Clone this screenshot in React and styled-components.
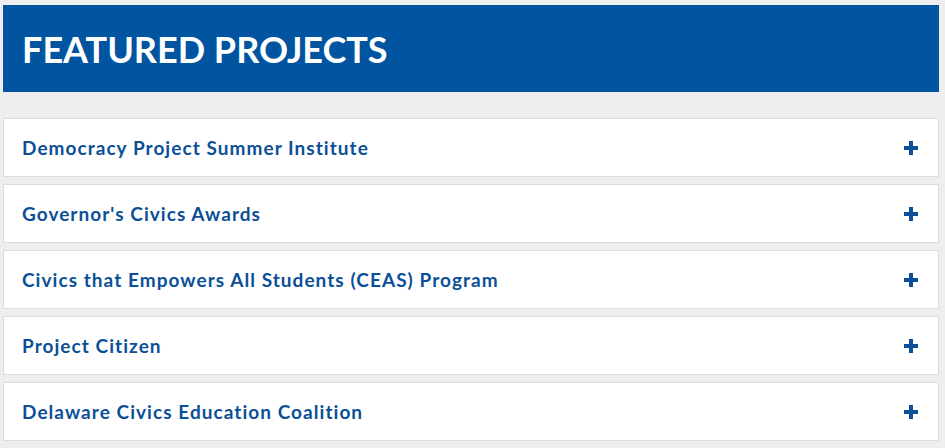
import React from 'react';
import styled, { createGlobalStyle } from 'styled-components';

const projects = [
  'Democracy Project Summer Institute',
  "Governor's Civics Awards",
  'Civics that Empowers All Students (CEAS) Program',
  'Project Citizen',
  'Delaware Civics Education Coalition',
];

const GlobalStyle = createGlobalStyle`
  body {
    margin: 0;
    background: #eeeeee;
    font-family: Lato, "Open Sans", sans-serif;
  }
`;

const Page = styled.div`
  padding: 5px 6px 8px 3px;
`;

const Banner = styled.header`
  height: 87px;
  background: #0054a0;
  display: flex;
  align-items: center;
  padding: 0 19px;
  box-sizing: border-box;
`;

const Title = styled.h1`
  margin: 0;
  color: #ffffff;
  font-size: 36px;
  font-weight: 700;
  text-transform: uppercase;
`;

const List = styled.div`
  margin-top: 26px;
  display: flex;
  flex-direction: column;
  gap: 7px;
`;

const Item = styled.button`
  height: 59px;
  box-sizing: border-box;
  display: flex;
  align-items: center;
  justify-content: space-between;
  padding: 0 19px 0 18px;
  background: #ffffff;
  border: 1px solid #dcdcdc;
  font-family: inherit;
  cursor: pointer;
  text-align: left;
`;

const Label = styled.span`
  color: #0b4f97;
  font-size: 19px;
  font-weight: 700;
  letter-spacing: 1.05px;
`;

const Plus = () => (
  <svg width="16" height="16" viewBox="0 0 16 16">
    <path d="M8 1v14M1 8h14" stroke="#0b4f97" strokeWidth="4" />
  </svg>
);

const App = () => {
  return (
    <Page>
      <GlobalStyle />
      <Banner>
        <Title>Featured Projects</Title>
      </Banner>
      <List>
        {projects.map((p) => (
          <Item key={p}>
            <Label>{p}</Label>
            <Plus />
          </Item>
        ))}
      </List>
    </Page>
  );
};

export default App;
